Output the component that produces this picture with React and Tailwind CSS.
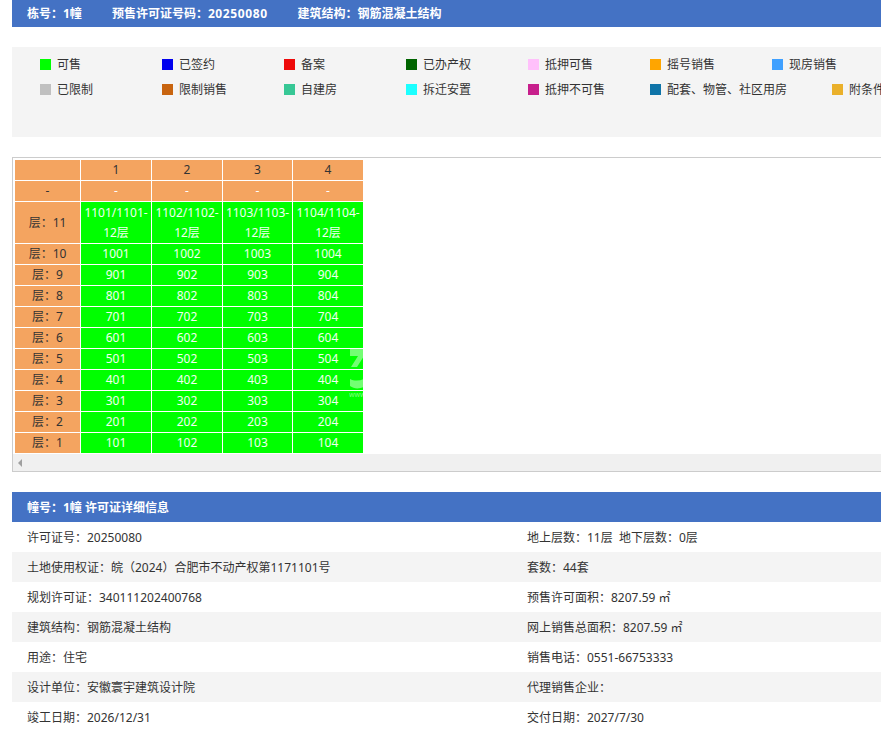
const legendRows = [
  [
    ['可售', 'bg-[#00ff00]'],
    ['已签约', 'bg-[#0000ee]'],
    ['备案', 'bg-[#ee0a0a]'],
    ['已办产权', 'bg-[#006400]'],
    ['抵押可售', 'bg-[#ffc0fb]'],
    ['摇号销售', 'bg-[#ffa500]'],
    ['现房销售', 'bg-[#3fa0ff]'],
  ],
  [
    ['已限制', 'bg-[#c0c0c0]'],
    ['限制销售', 'bg-[#c8640f]'],
    ['自建房', 'bg-[#37c795]'],
    ['拆迁安置', 'bg-[#1cffff]'],
    ['抵押不可售', 'bg-[#c71f8c]'],
    ['配套、物管、社区用房', 'bg-[#0f74a8]'],
    ['附条件销售', 'bg-[#eab02a]'],
  ],
];

const floors = [
  ['层：10', ['1001', '1002', '1003', '1004']],
  ['层：9', ['901', '902', '903', '904']],
  ['层：8', ['801', '802', '803', '804']],
  ['层：7', ['701', '702', '703', '704']],
  ['层：6', ['601', '602', '603', '604']],
  ['层：5', ['501', '502', '503', '504']],
  ['层：4', ['401', '402', '403', '404']],
  ['层：3', ['301', '302', '303', '304']],
  ['层：2', ['201', '202', '203', '204']],
  ['层：1', ['101', '102', '103', '104']],
];

const details = [
  ['许可证号：20250080', '地上层数：11层  地下层数：0层'],
  ['土地使用权证：皖（2024）合肥市不动产权第1171101号', '套数：44套'],
  ['规划许可证：340111202400768', '预售许可面积：8207.59 ㎡'],
  ['建筑结构：钢筋混凝土结构', '网上销售总面积：8207.59 ㎡'],
  ['用途：住宅', '销售电话：0551-66753333'],
  ['设计单位：安徽寰宇建筑设计院', '代理销售企业：'],
  ['竣工日期：2026/12/31', '交付日期：2027/7/30'],
];

const orange = 'bg-[#f4a460] text-[#333] border border-[#fff] p-0 text-center font-normal';
const green = 'bg-[#00ff00] text-[#f2fff2] border border-[#fff] p-0 text-center font-normal';

export default function App() {
  return (
    <div className="w-[881px] h-[746px] overflow-hidden bg-white pl-3 text-[12px] text-[#333] font-['Noto_Sans','Noto_Sans_CJK_SC',sans-serif]">
      <div className="h-[27px] bg-[#4472c4] pl-[15px] flex items-center gap-[30px] font-bold text-white w-[1000px]">
        <span>栋号：1幢</span>
        <span>预售许可证号码：<span className="tracking-[0.6px]">20250080</span></span>
        <span>建筑结构：钢筋混凝土结构</span>
      </div>

      <div className="mt-5 h-[90px] w-[1000px] bg-[#f4f4f4] pl-7 pt-[5px]">
        {legendRows.map((row, i) => (
          <div key={i} className="flex h-[25px] items-center">
            {row.map(([label, color]) => (
              <div key={label} className="min-w-[122px] pr-[45px] flex items-center">
                <span className={`w-[11px] h-[11px] mr-[6px] shrink-0 ${color}`} />
                <span className="whitespace-nowrap">{label}</span>
              </div>
            ))}
          </div>
        ))}
      </div>

      <div className="mt-5 h-[315px] border border-[#ccc] flex flex-col w-[1000px]">
        <div className="h-[296px] pt-[1px] pl-[1px] relative">
          <table className="border-collapse table-fixed w-[350px] leading-[20px]">
            <colgroup>
              <col className="w-[66px]" />
              <col className="w-[71px]" />
              <col className="w-[71px]" />
              <col className="w-[70px]" />
              <col className="w-[71px]" />
            </colgroup>
            <tbody>
              <tr className="h-[21px]">
                <td className={orange} />
                {[1, 2, 3, 4].map((n) => <td key={n} className={orange}>{n}</td>)}
              </tr>
              <tr className="h-[21px]">
                <td className={orange}>-</td>
                {[1, 2, 3, 4].map((n) => <td key={n} className={`${orange} text-[#fff]`}>-</td>)}
              </tr>
              <tr className="h-[42px]">
                <td className={orange}>层：11</td>
                {['1101/1101-12层', '1102/1102-12层', '1103/1103-12层', '1104/1104-12层'].map((t) => (
                  <td key={t} className={green}>
                    <span className="block whitespace-nowrap overflow-hidden">{t.slice(0, 10)}</span>
                    <span className="block">{t.slice(10)}</span>
                  </td>
                ))}
              </tr>
              {floors.map(([floor, rooms]) => (
                <tr key={floor} className="h-[21px]">
                  <td className={orange}>{floor}</td>
                  {rooms.map((r) => <td key={r} className={green}>{r}</td>)}
                </tr>
              ))}
            </tbody>
          </table>
          {/* site watermark, only shows on the green cells */}
          <svg className="absolute left-[336px] top-[188px]" width="15" height="56" viewBox="0 0 15 56">
            <path d="M1 3H15V10L8 21H2L9 10H1Z" fill="#fff" fillOpacity="0.45" />
            <path d="M1 33C5 35 10 35 15 33V41C10 43 5 43 1 40Z" fill="#fff" fillOpacity="0.45" />
          </svg>
          <span className="absolute left-[336px] top-[233px] w-[15px] overflow-hidden text-[7px] leading-[8px] text-white/50">www</span>
        </div>
        <div className="h-[17px] bg-[#f0f0f0] flex items-center pl-[5px]">
          <span className="w-0 h-0 border-y-[4px] border-y-transparent border-r-[4px] border-r-[#a0a0a0]" />
        </div>
      </div>

      <div className="mt-5 h-[30px] w-[1000px] bg-[#4472c4] pl-[15px] pt-[1px] flex items-center font-bold text-white">
        幢号：1幢 许可证详细信息
      </div>

      <div className="w-[1000px]">
        {details.map(([left, right], i) => (
          <div key={left} className={`h-[30px] flex items-center pl-[15px] pt-[1px] ${i % 2 ? 'bg-[#f4f4f4]' : 'bg-white'}`}>
            <span className="w-[500px] whitespace-pre">{left}</span>
            <span className="whitespace-pre">{right}</span>
          </div>
        ))}
      </div>
    </div>
  );
}
